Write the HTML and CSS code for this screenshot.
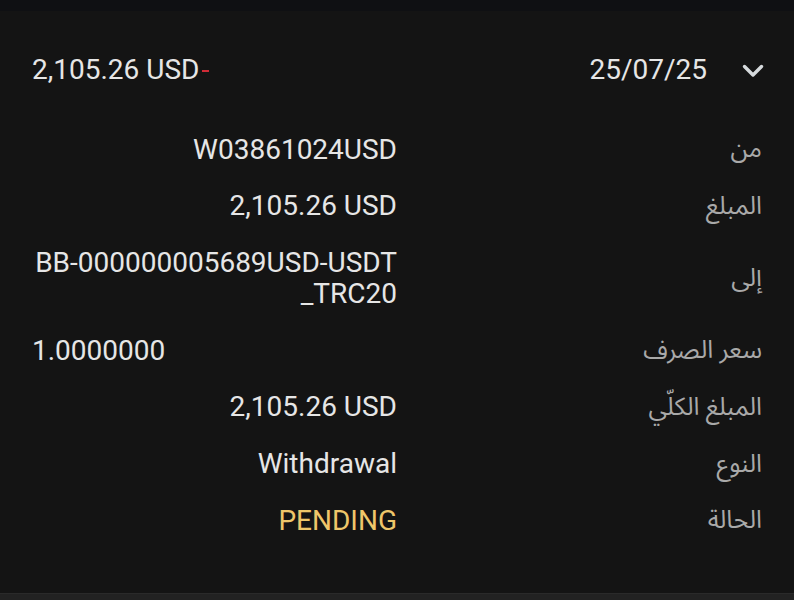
FILE: index.html
```html
<!DOCTYPE html>
<html lang="ar">
<head>
<meta charset="utf-8">
<link rel="stylesheet" href="styles.css">
</head>
<body>
<div class="topbar"></div>
<div class="card">
  <div class="header">
    <div class="amount">2,105.26 USD<span class="minus"></span></div>
    <div class="date-wrap">
      <span class="date">25/07/25</span>
      <svg class="chevron" width="22" height="16" viewBox="0 0 22 16"><path d="M2.5 3.5 L11 12 L19.5 3.5" fill="none" stroke="#d6dadd" stroke-width="3.4" stroke-linecap="round" stroke-linejoin="round"/></svg>
    </div>
  </div>
  <div class="rows">
    <div class="row"><div class="value">W03861024USD</div><div class="label">من</div></div>
    <div class="row"><div class="value">2,105.26 USD</div><div class="label">المبلغ</div></div>
    <div class="row"><div class="value nowrap">BB-000000005689USD-USDT<br>_TRC20</div><div class="label">إلى</div></div>
    <div class="row"><div class="value left">1.0000000</div><div class="label">سعر الصرف</div></div>
    <div class="row"><div class="value">2,105.26 USD</div><div class="label">المبلغ الكلّي</div></div>
    <div class="row"><div class="value">Withdrawal</div><div class="label">النوع</div></div>
    <div class="row"><div class="value pending">PENDING</div><div class="label">الحالة</div></div>
  </div>
</div>
<div class="next"></div>
</body>
</html>
```
FILE: styles.css
```css
html, body {
  margin: 0;
  padding: 0;
  background: #141414;
  font-family: "Roboto", "Noto Sans Arabic", "DejaVu Sans", sans-serif;
  color: #e6e6e6;
  overflow: hidden;
}
.topbar {
  height: 11px;
  background: #0f1013;
  box-shadow: 0 1px 2px rgba(0,0,0,0.35);
}
.card {
  padding: 43px 30px 44px 32px;
  background: #141414;
}
.header {
  display: flex;
  justify-content: space-between;
  align-items: center;
  height: 32px;
}
.amount {
  font-size: 28px;
  line-height: 32px;
  display: flex;
  align-items: center;
}
.minus {
  display: inline-block;
  width: 7px;
  height: 2px;
  background: #cf2b36;
  margin-left: 3px;
  margin-top: 1px;
}
.date-wrap {
  display: flex;
  align-items: center;
  gap: 35px;
}
.date {
  font-size: 28px;
  line-height: 32px;
}
.chevron {
  display: block;
  margin-top: 1px;
}
.rows {
  margin-top: 35px;
  margin-right: 2px;
}
.row {
  display: flex;
  align-items: center;
  padding: 12.33px 0;
}
.value {
  width: 365px;
  flex: none;
  text-align: right;
  font-size: 28px;
  line-height: 31.5px;
}
.value.left {
  text-align: left;
}
.value.nowrap {
  white-space: nowrap;
  line-height: 31.5px;
}
.value.pending {
  color: #efc66a;
}
.label {
  flex: 1;
  text-align: right;
  direction: rtl;
  font-size: 25px;
  line-height: 32px;
  color: #a9a9a9;
}
.next {
  height: 7px;
  border-top: 1px solid #2a2a2a;
  background: #222222;
}
```
